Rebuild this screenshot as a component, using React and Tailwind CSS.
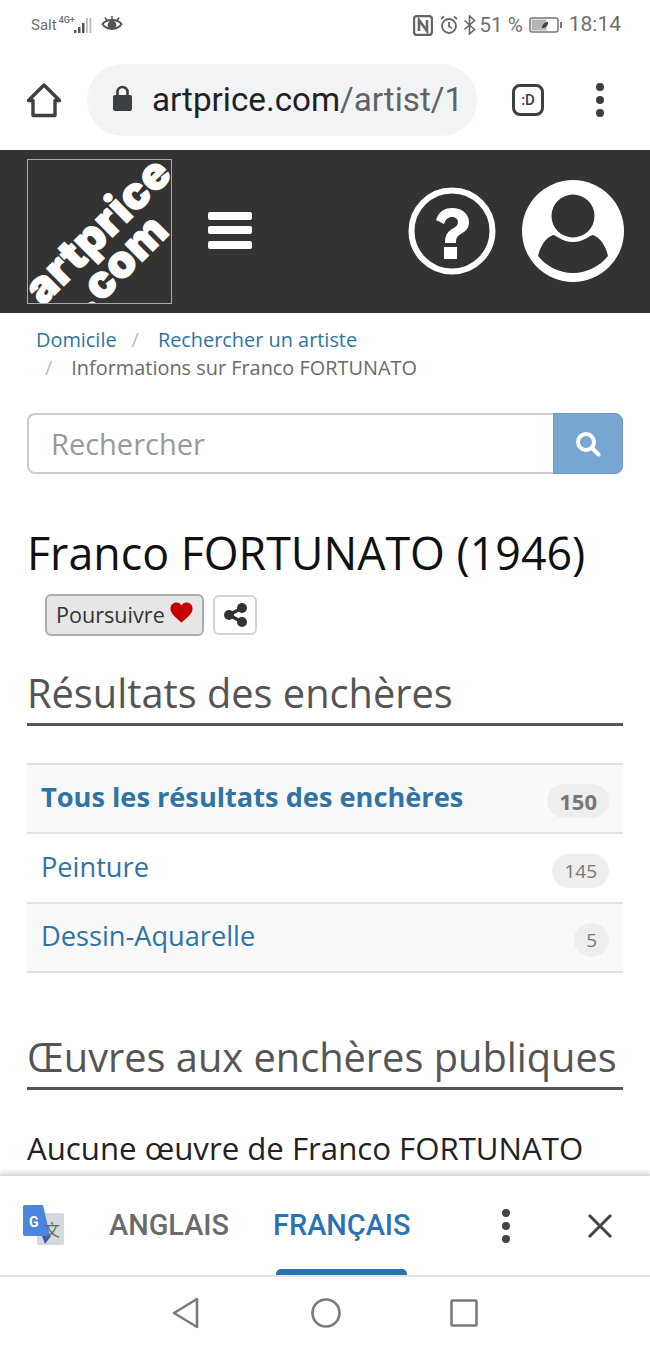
import React from 'react';

const openSans = { fontFamily: '"Open Sans", sans-serif' };

function StatusBar() {
  return (
    <div className="h-[50px] flex items-center justify-between pl-[31px] pr-[29px] text-[#6f6f6f] font-['Roboto',sans-serif]">
      <div className="flex items-center">
        <span className="text-[15px]">Salt</span>
        <span className="text-[9px] leading-none ml-[2px] mb-[9px] font-medium">4G+</span>
        <svg width="20" height="20" viewBox="0 0 20 20" className="-ml-[3px] mt-[2px]">
          <rect x="2" y="14" width="2.500" height="3" fill="#555" />
          <rect x="6" y="11" width="2.500" height="6" fill="#555" />
          <rect x="10" y="7" width="2.500" height="10" fill="#555" />
          <rect x="14" y="2" width="1.800" height="15" fill="#bbb" />
          <rect x="17.500" y="2" width="1.800" height="15" fill="#bbb" />
        </svg>
        <svg width="22" height="20" viewBox="0 0 22 20" className="ml-[9px]" fill="none" stroke="#555" strokeWidth="2">
          <path d="M1.500 9c4-5.500 15-5.500 19 0-4 6.500-15 6.500-19 0z" />
          <circle cx="11" cy="10" r="3.400" fill="#555" />
          <path d="M4 2.500l2 3M18 2.500l-2 3M11 1v3" strokeWidth="1.600" />
        </svg>
      </div>
      <div className="flex items-center text-[20.500px]">
        <svg width="20" height="21" viewBox="0 0 20 21">
          <rect x="1" y="1" width="18" height="19" rx="3" fill="none" stroke="#666" strokeWidth="2.400" />
          <path d="M6 16V5l8 11V5" fill="none" stroke="#666" strokeWidth="2.600" />
        </svg>
        <svg width="20" height="20" viewBox="0 0 20 20" className="ml-[6px]" fill="none" stroke="#666" strokeWidth="1.800">
          <circle cx="10" cy="11" r="7" />
          <path d="M10 7v4.500l3 1.500M2 4l3-2.500M18 4l-3-2.500" />
        </svg>
        <svg width="14" height="20" viewBox="0 0 14 20" className="ml-[4px]" fill="none" stroke="#666" strokeWidth="1.600">
          <path d="M1.500 5.500l10 9-5 4.500V1l5 4.500-10 9" />
        </svg>
        <span className="ml-[3px]">51 %</span>
        <svg width="35" height="18" viewBox="0 0 35 18" className="ml-[6px]">
          <rect x="1" y="2" width="28" height="14" rx="2" fill="#fff" stroke="#777" strokeWidth="1.500" />
          <rect x="2.500" y="3.500" width="15" height="11" fill="#b5b5b5" />
          <path d="M13 12c0-4 3-6 6-6 0 4-2 6-6 6z" fill="#444" />
          <rect x="31" y="6" width="2" height="6" fill="#777" />
        </svg>
        <span className="ml-[5px] text-[21px]">18:14</span>
      </div>
    </div>
  );
}

function BrowserBar() {
  return (
    <div className="h-[100px] flex items-center pl-[26px]">
      <svg width="36" height="36" viewBox="0 0 36 36" fill="none" stroke="#3c4043" strokeWidth="3.400" strokeLinejoin="round">
        <path d="M2.500 18.500L18 3l15.500 15.500H29V33.500H7V18.500z" />
      </svg>
      <div className="ml-[25px] w-[390px] h-[72px] rounded-full bg-[#f1f3f4] flex items-center pl-[25px] overflow-hidden">
        <svg width="22" height="28" viewBox="0 0 22 28" className="shrink-0 -mt-[2px]">
          <rect x="1" y="10" width="19" height="16" rx="2" fill="#3c4043" />
          <path d="M5.500 11V7a5 5 0 0 1 10 0v4" fill="none" stroke="#3c4043" strokeWidth="2.600" />
        </svg>
        <span className="ml-[18px] text-[33.200px] whitespace-nowrap font-['Roboto',sans-serif] text-[#202124]">
          artprice.com<span className="text-[#5f6368]">/artist/1</span>
        </span>
      </div>
      <div className="ml-[35px] w-[32px] h-[32px] border-[3px] border-[#3c4043] rounded-[8px] flex items-center justify-center text-[15px] font-medium text-[#3c4043] font-['Roboto',sans-serif]">
        :D
      </div>
      <div className="ml-[52px] flex flex-col gap-[5px]">
        <span className="w-[8px] h-[8px] rounded-full bg-[#3c4043]" />
        <span className="w-[8px] h-[8px] rounded-full bg-[#3c4043]" />
        <span className="w-[8px] h-[8px] rounded-full bg-[#3c4043]" />
      </div>
    </div>
  );
}

function Logo() {
  return (
    <div className="relative w-[145px] h-[145px] border border-[#a8a8a8] overflow-hidden text-white font-['Inter',sans-serif] font-black leading-none [-webkit-text-stroke:1px_white]">
      {/* the wordmark sits on the diagonal and is cropped by the square */}
      <span className="absolute left-[-24px] top-[47px] text-[45px] -rotate-45 whitespace-nowrap tracking-[0.5px]">artprice</span>
      <span className="absolute left-[32px] top-[80px] text-[45px] -rotate-45 whitespace-nowrap tracking-[0.5px]">.com</span>
    </div>
  );
}

function SiteHeader() {
  return (
    <div className="h-[163px] bg-[#333333] flex items-center pl-[27px] pr-[26px]">
      <Logo />
      <div className="ml-[36px] -mt-[3px] flex flex-col gap-[6.500px]">
        <span className="w-[44px] h-[8px] rounded-[2px] bg-white" />
        <span className="w-[44px] h-[8px] rounded-[2px] bg-white" />
        <span className="w-[44px] h-[8px] rounded-[2px] bg-white" />
      </div>
      <svg width="90" height="90" viewBox="0 0 90 90" className="ml-auto -mt-[1px]">
        <circle cx="45" cy="45" r="40.500" fill="none" stroke="#fff" strokeWidth="6" />
        <path d="M29 34c3-9 9-12 16-12 10 0 17 6 17 14 0 6-3 9-8 12-4 2-5 4-5 9H38c0-7 2-11 7-14 4-2 6-4 6-7 0-3-3-5-6-5-4 0-6 2-8 7z" fill="#fff" />
        <rect x="37" y="61" width="13" height="12" fill="#fff" />
      </svg>
      <svg width="102" height="102" viewBox="0 0 102 102" className="ml-[25px] -mt-[2px]">
        <circle cx="51" cy="51" r="51" fill="#fff" />
        <circle cx="51" cy="36" r="21.500" fill="#333" />
        <path d="M16 76c2-9 7-18 15-21 3 0 9 7 20 7s17-7 20-7c8 3 13 12 15 21-8 10-21 17-35 17s-27-7-35-17z" fill="#333" />
      </svg>
    </div>
  );
}

function CountRow({ label, count, bold, striped }) {
  return (
    <div className={`h-[69.330px] flex items-center justify-between pl-[15px] pr-[14px] border-b-2 border-[#e2e2e2] ${striped ? 'bg-[#f9f9f9]' : 'bg-white'}`}>
      <span className={`text-[27.200px] text-[#2f74a4] -ml-px ${bold ? 'font-bold -mt-[3px]' : '-mt-[1px]'}`}>{label}</span>
      <span className={`h-[34px] rounded-full bg-[#eeeeee] text-[#777] flex items-center px-[12px] ${bold ? 'text-[22px] font-bold mt-[5px]' : 'text-[19px] mt-[6px]'}`}>
        {count}
      </span>
    </div>
  );
}

function SectionTitle({ children }) {
  return (
    <h2 className="text-[39.750px] leading-[52px] pb-[4px] text-[#555555] border-b-[3px] border-[#555555] whitespace-nowrap">
      {children}
    </h2>
  );
}

function Content() {
  return (
    <div className="px-[27px]" style={openSans}>
      <div className="pt-[13px] text-[19.900px] leading-[28px] pl-[9px]">
        <div>
          <span className="text-[#2f74a4]">Domicile</span>
          <span className="text-[#bbbbbb] ml-[15px]">/</span>
          <span className="text-[#2f74a4] ml-[19px]">Rechercher un artiste</span>
        </div>
        <div>
          <span className="text-[#bbbbbb] ml-[9px]">/</span>
          <span className="text-[#6a6a6a] ml-[19px]">Informations sur Franco FORTUNATO</span>
        </div>
      </div>

      <div className="mt-[31px] flex h-[61px]">
        <div className="flex-1 border-2 border-r-0 border-[#cccccc] rounded-l-[8px] flex items-center pl-[22px] text-[29px] text-[#999999]">
          Rechercher
        </div>
        <div className="w-[70px] bg-[#78a6d2] border border-[#6a98c6] rounded-r-[8px] flex items-center justify-center">
          <svg width="26" height="26" viewBox="0 0 26 26" fill="none" stroke="#fff" strokeWidth="4" strokeLinecap="round">
            <circle cx="11" cy="11" r="8" />
            <path d="M17 17l6.500 6.500" />
          </svg>
        </div>
      </div>

      <h1 className="mt-[46px] text-[44.750px] leading-[66px] text-[#111111] whitespace-nowrap">
        Franco FORTUNATO (1946)
      </h1>

      <div className="mt-[8px] ml-[18px] flex items-center">
        <div className="h-[42px] w-[159px] bg-[#e6e6e6] border-2 border-[#adadad] rounded-[6px] flex items-center pl-[9px] text-[21.600px] text-[#333333]">
          Poursuivre
          <svg width="23" height="21" viewBox="0 0 23 21" className="ml-[5px] -mt-[6px]">
            <path d="M11.500 20.500C4 14 .5 11 .5 6.500.5 3 3 .5 6.500.5c2 0 4 1 5 3 1-2 3-3 5-3C20 .5 22.500 3 22.500 6.500c0 4.500-3.500 7.500-11 14z" fill="#c40000" />
          </svg>
        </div>
        <div className="ml-[9px] w-[44px] h-[40px] border-2 border-[#d4d4d4] rounded-[6px] flex items-center justify-center">
          <svg width="23" height="24" viewBox="0 0 23 24">
            <path d="M18 5L5 12l13 7" fill="none" stroke="#333" strokeWidth="3.500" />
            <circle cx="18" cy="5" r="5" fill="#333" />
            <circle cx="5" cy="12" r="5" fill="#333" />
            <circle cx="18" cy="19" r="5" fill="#333" />
          </svg>
        </div>
      </div>

      <div className="mt-[31px]">
        <SectionTitle>Résultats des enchères</SectionTitle>
      </div>

      <div className="mt-[37px] border-t-2 border-[#e2e2e2]">
        <CountRow label="Tous les résultats des enchères" count="150" bold striped />
        <CountRow label="Peinture" count="145" />
        <CountRow label="Dessin-Aquarelle" count="5" striped />
      </div>

      <div className="mt-[58px]">
        <SectionTitle>Œuvres aux enchères publiques</SectionTitle>
      </div>

      <p className="mt-[37px] text-[31.200px] leading-[42px] text-[#222222] whitespace-nowrap">
        Aucune œuvre de Franco FORTUNATO
      </p>
    </div>
  );
}

function TranslateBar() {
  return (
    <div className="h-[103px] bg-white border-t-2 border-[#dcdcdc] border-b-2 border-b-[#e4e4e4] flex items-center pl-[23px] relative font-['Roboto',sans-serif] shadow-[0_-3px_3px_rgba(0,0,0,0.1)]">
      <svg width="42" height="42" viewBox="0 0 42 42" className="-mt-[2px]">
        <rect x="14" y="9" width="27" height="32" rx="2" fill="#d5d8dc" />
        <path d="M2 1h18l7 31H2a2 2 0 0 1-2-2V3a2 2 0 0 1 2-2z" fill="#4a86e0" />
        <path d="M19 32h9l-6 8z" fill="#3f51b5" />
        <text x="6" y="23" fontSize="14" fontWeight="700" fill="#fff" fontFamily="Roboto, sans-serif">G</text>
        <text x="21" y="32" fontSize="16" fill="#666" fontFamily="'Noto Sans CJK SC', sans-serif">文</text>
      </svg>
      <span className="ml-[44px] text-[28.900px] font-medium text-[#6b6b6b]">ANGLAIS</span>
      <span className="ml-[44px] text-[28.900px] font-medium text-[#2b72b5]">FRANÇAIS</span>
      <div className="ml-[91px] flex flex-col gap-[5px]">
        <span className="w-[8px] h-[8px] rounded-full bg-[#444]" />
        <span className="w-[8px] h-[8px] rounded-full bg-[#444]" />
        <span className="w-[8px] h-[8px] rounded-full bg-[#444]" />
      </div>
      <svg width="26" height="26" viewBox="0 0 26 26" className="ml-[77px]" stroke="#444" strokeWidth="3">
        <path d="M2 2l22 22M24 2L2 24" />
      </svg>
      {/* active tab underline, sits on the bottom edge */}
      <span className="absolute left-[276px] bottom-0 w-[131px] h-[6px] rounded-t-[5px] bg-[#2b72b5]" />
    </div>
  );
}

function NavBar() {
  return (
    <div className="h-[73px] bg-white flex items-center pl-[171px] pb-[2px]">
      <svg width="30" height="32" viewBox="0 0 30 32" fill="none" stroke="#7a7a7a" strokeWidth="2.600" strokeLinejoin="round">
        <path d="M26 2v28L3 16z" />
      </svg>
      <svg width="32" height="32" viewBox="0 0 32 32" className="ml-[109px]" fill="none" stroke="#7a7a7a" strokeWidth="2.600">
        <ellipse cx="16" cy="16" rx="13.500" ry="13.500" />
      </svg>
      <svg width="28" height="28" viewBox="0 0 28 28" className="ml-[108px]" fill="none" stroke="#7a7a7a" strokeWidth="2.600">
        <rect x="1.500" y="1.500" width="25" height="25" rx="1" />
      </svg>
    </div>
  );
}

export default function App() {
  return (
    <div className="relative w-[650px] h-[1350px] bg-white overflow-hidden">
      <StatusBar />
      <BrowserBar />
      <SiteHeader />
      <Content />
      {/* translate prompt and system nav stay pinned over the page */}
      <div className="absolute left-0 right-0 bottom-0">
        <TranslateBar />
        <NavBar />
      </div>
    </div>
  );
}
